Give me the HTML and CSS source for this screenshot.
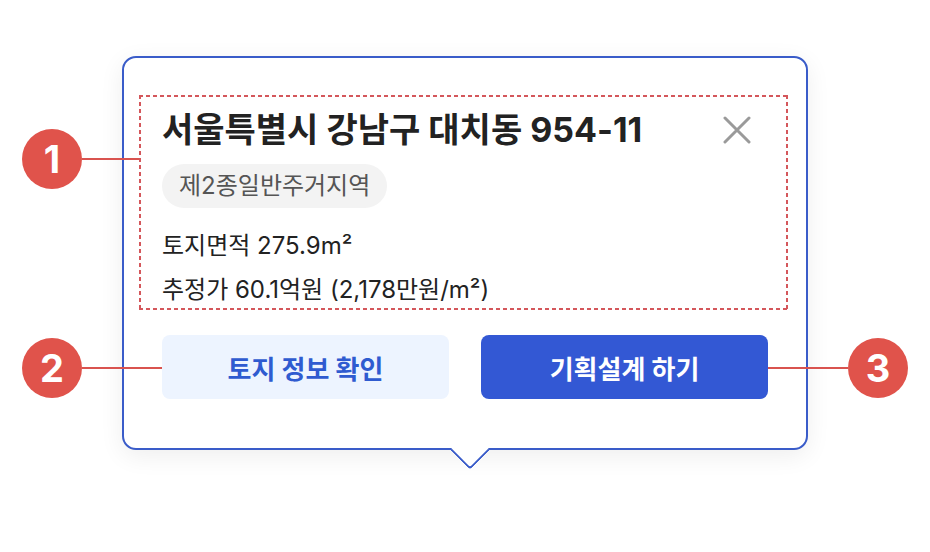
FILE: index.html
```html
<!DOCTYPE html>
<html lang="ko">
<head>
<meta charset="utf-8">
<title>토지 정보 팝업</title>
<link rel="stylesheet" href="styles.css">
</head>
<body>
<div class="stage">
  <div class="card">
    <section class="info">
      <div class="title-row">
        <h1 class="title">서울특별시 강남구 대치동 954-11</h1>
        <button class="close" aria-label="닫기">
          <svg width="28" height="28" viewBox="0 0 28 28"><path d="M2 2 L26 26 M26 2 L2 26" stroke="#9a9a9a" stroke-width="3" stroke-linecap="round" fill="none"/></svg>
        </button>
      </div>
      <span class="chip">제2종일반주거지역</span>
      <div class="facts">
        <p class="fact">토지면적 275.9m²</p>
        <p class="fact">추정가 60.1억원 (2,178만원/m²)</p>
      </div>
    </section>
    <div class="actions">
      <button class="btn btn-light">토지 정보 확인</button>
      <button class="btn btn-primary">기획설계 하기</button>
    </div>
    <span class="tail"></span>
  </div>

  <div class="marker m1"><span class="num">1</span><span class="lead"></span></div>
  <div class="marker m2"><span class="num">2</span><span class="lead"></span></div>
  <div class="marker m3"><span class="lead"></span><span class="num">3</span></div>
</div>
</body>
</html>
```

FILE: styles.css
```css
* { box-sizing: border-box; }
html, body { margin: 0; padding: 0; background: #ffffff; }
body {
  font-family: Inter, "Noto Sans CJK KR", sans-serif;
  color: #222222;
}
.stage {
  position: relative;
  width: 930px;
  height: 552px;
  padding: 56px 0 0 122px;
}
.card {
  position: relative;
  width: 686px;
  border: 2px solid #3a5cc9;
  border-radius: 14px;
  background: #ffffff;
  padding: 37px 38px 49px 38px;
  box-shadow: 0 6px 24px rgba(0, 0, 0, 0.07);
}
.info {
  margin: 0 -20px 0 -23px;
  padding: 17px 20px 4px 23px;
  --dash: #d4575b;
  background:
    repeating-linear-gradient(90deg, var(--dash) 0 4px, transparent 4px 7px) top left / 100% 2px no-repeat,
    repeating-linear-gradient(90deg, var(--dash) 0 4px, transparent 4px 7px) bottom left / 100% 2px no-repeat,
    repeating-linear-gradient(180deg, var(--dash) 0 4px, transparent 4px 7px) top left / 2px 100% no-repeat,
    repeating-linear-gradient(180deg, var(--dash) 0 4px, transparent 4px 7px) top right / 2px 100% no-repeat;
  display: flex;
  flex-direction: column;
  align-items: flex-start;
}
.title-row {
  width: 100%;
  height: 36px;
  display: flex;
  align-items: center;
  justify-content: space-between;
}
.title {
  margin: 0;
  font-size: 34px;
  font-weight: 700;
  line-height: 36px;
  color: #222222;
  letter-spacing: 0;
}
.close {
  width: 28px;
  height: 28px;
  padding: 0;
  margin-right: 17px;
  border: 0;
  background: none;
  display: flex;
}
.chip {
  margin-top: 16px;
  height: 44px;
  padding: 0 17px;
  border-radius: 22px;
  background: #f3f3f3;
  color: #555555;
  font-size: 24px;
  line-height: 44px;
}
.facts {
  margin-top: 22px;
  display: flex;
  flex-direction: column;
  gap: 12px;
}
.fact {
  margin: 0;
  font-size: 24px;
  line-height: 32px;
  color: #222222;
}
.actions {
  margin-top: 25px;
  display: grid;
  grid-template-columns: 1fr 1fr;
  gap: 32px;
}
.btn {
  height: 64px;
  border: 0;
  border-radius: 8px;
  font-family: Inter, "Noto Sans CJK KR", sans-serif;
  font-size: 26px;
  font-weight: 700;
}
.btn-light { background: #edf4ff; color: #2f5bd0; }
.btn-primary { background: #3358d4; color: #ffffff; }
.tail {
  position: absolute;
  left: 332px;
  bottom: -16px;
  width: 28px;
  height: 28px;
  background: #ffffff;
  border-right: 2px solid #3a5cc9;
  border-bottom: 2px solid #3a5cc9;
  border-bottom-right-radius: 4px;
  transform: rotate(45deg);
}
.marker {
  position: absolute;
  display: flex;
  align-items: center;
}
.num {
  width: 60px;
  height: 60px;
  border-radius: 50%;
  background: #e0534b;
  color: #ffffff;
  font-family: Inter, sans-serif;
  font-weight: 700;
  font-size: 38px;
  display: flex;
  align-items: center;
  justify-content: center;
}
.lead {
  height: 2px;
  background: #d9534f;
}
.m1 { left: 22px; top: 129px; }
.m1 .lead { width: 57px; }
.m2 { left: 22px; top: 338px; }
.m2 .lead { width: 80px; }
.m3 { left: 768px; top: 338px; }
.m3 .lead { width: 80px; }
```
